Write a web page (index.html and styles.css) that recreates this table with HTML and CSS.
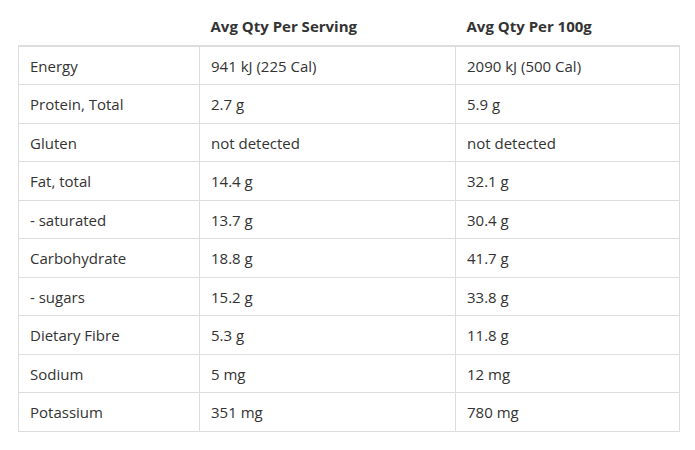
FILE: index.html
```html
<!DOCTYPE html>
<html>
<head>
<meta charset="utf-8">
<link rel="stylesheet" href="styles.css">
</head>
<body>
<div class="wrap">
<table class="nutrition">
  <colgroup>
    <col class="c1"><col class="c2"><col class="c3">
  </colgroup>
  <thead>
    <tr><th></th><th>Avg Qty Per Serving</th><th>Avg Qty Per 100g</th></tr>
  </thead>
  <tbody>
    <tr><td>Energy</td><td>941 kJ (225 Cal)</td><td>2090 kJ (500 Cal)</td></tr>
    <tr><td>Protein, Total</td><td>2.7 g</td><td>5.9 g</td></tr>
    <tr><td>Gluten</td><td>not detected</td><td>not detected</td></tr>
    <tr><td>Fat, total</td><td>14.4 g</td><td>32.1 g</td></tr>
    <tr><td>- saturated</td><td>13.7 g</td><td>30.4 g</td></tr>
    <tr><td>Carbohydrate</td><td>18.8 g</td><td>41.7 g</td></tr>
    <tr><td>- sugars</td><td>15.2 g</td><td>33.8 g</td></tr>
    <tr><td>Dietary Fibre</td><td>5.3 g</td><td>11.8 g</td></tr>
    <tr><td>Sodium</td><td>5 mg</td><td>12 mg</td></tr>
    <tr><td>Potassium</td><td>351 mg</td><td>780 mg</td></tr>
  </tbody>
</table>
</div>
</body>
</html>
```
FILE: styles.css
```css
html, body {
  margin: 0;
  padding: 0;
  background: #fff;
}
body {
  font-family: "Open Sans", "Liberation Sans", sans-serif;
  font-size: 15px;
  color: #333;
}
.wrap {
  padding: 8px 16px 0 18px;
}
.nutrition {
  border-collapse: collapse;
  width: 661px;
  table-layout: fixed;
}
.c1 { width: 181px; }
.c2 { width: 256px; }
.c3 { width: 224px; }
.nutrition th {
  text-align: left;
  font-weight: 700;
  line-height: 21.5px;
  padding: 8px 11px 7px;
  border-bottom: 2px solid #ddd;
  vertical-align: bottom;
}
.nutrition td {
  line-height: 21.5px;
  padding: 9px 11px 7px;
  border: 1px solid #ddd;
  vertical-align: top;
}
.nutrition tbody tr:first-child td {
  border-top: 0;
}
```
